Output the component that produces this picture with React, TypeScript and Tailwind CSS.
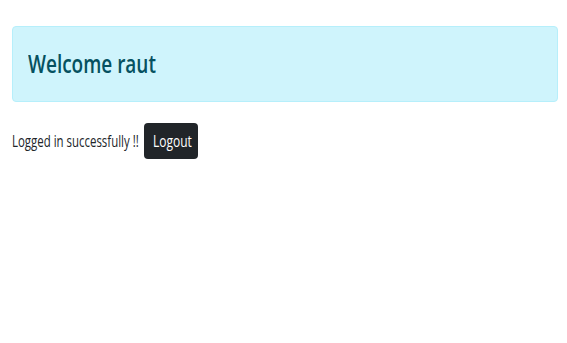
export default function App() {
  return (
    <div className="w-[567px] h-[343px] bg-white" style={{ fontFamily: '"Open Sans", sans-serif' }}>
      <div className="pt-[26px] pl-[12px]">
        <div className="w-[546px] h-[76px] rounded-[4px] border border-[#b6effb] bg-[#cff4fc] px-[15px] flex items-center">
          <div className="w-[130px] h-[30px] relative">
            <span className="absolute left-0 top-[-5px] text-[26px] leading-[38px] font-semibold text-[#055160] whitespace-nowrap origin-left scale-x-[0.73]">
              Welcome raut
            </span>
          </div>
        </div>
        <div className="mt-[21px] flex items-center">
          <div className="w-[132px] h-[24px] relative">
            <span className="absolute left-0 top-0 text-[16px] leading-[24px] text-[#212529] whitespace-nowrap origin-left scale-x-[0.715]">
              Logged in successfully !!
            </span>
          </div>
          <button className="w-[54px] h-[36px] rounded-[4px] bg-[#212529] text-white text-[16px] relative">
            <span className="absolute left-[9px] top-[6px] leading-[24px] whitespace-nowrap origin-left scale-x-[0.75]">Logout</span>
          </button>
        </div>
      </div>
    </div>
  );
}
